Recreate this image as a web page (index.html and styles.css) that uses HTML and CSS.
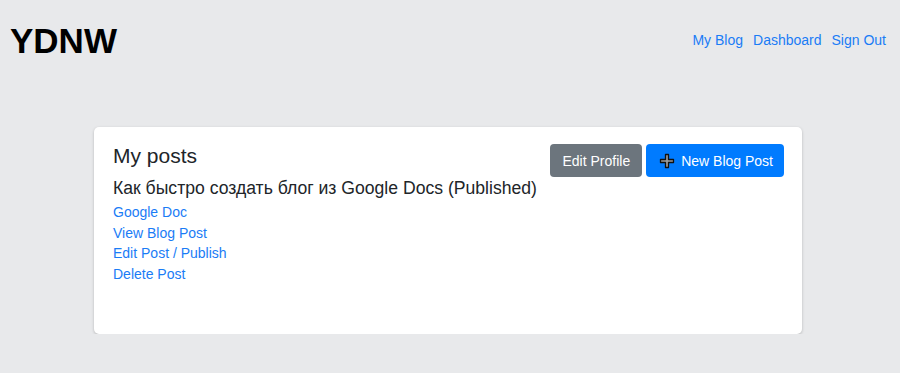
FILE: index.html
```html
<!DOCTYPE html>
<html lang="ru">
<head>
  <meta charset="UTF-8">
  <meta name="viewport" content="width=device-width, initial-scale=1.0">
  <title>YDNW</title>
  <link rel="stylesheet" href="styles.css">
</head>
<body>

  <header class="topbar">
    <span class="logo">YDNW</span>
    <nav class="nav">
      <a href="#">My Blog</a>
      <a href="#">Dashboard</a>
      <a href="#">Sign Out</a>
    </nav>
  </header>

  <div class="card">
    <div class="card-head">
      <h2>My posts</h2>
      <div class="actions">
        <button class="btn btn-gray">Edit Profile</button>
        <button class="btn btn-blue">
          <svg class="plus" width="16" height="16" viewBox="0 0 16 16">
            <path d="M6.5 1.5h3v5h5v3h-5v5h-3v-5h-5v-3h5z" fill="#9a9a9a" stroke="#111" stroke-width="1.3" stroke-linejoin="round"/>
          </svg>
          New Blog Post
        </button>
      </div>
    </div>

    <div class="post">
      <div class="post-title">Как быстро создать блог из Google Docs (Published)</div>
      <a href="#">Google Doc</a>
      <a href="#">View Blog Post</a>
      <a href="#">Edit Post / Publish</a>
      <a href="#">Delete Post</a>
    </div>
  </div>

</body>
</html>
```

FILE: styles.css
```css
body {
  font-family: "Liberation Sans", Arial, sans-serif;
  margin: 0;
  padding: 0;
  background-color: #e8e9eb;
  color: #212529;
}

a {
  color: #1a7cf6;
  text-decoration: none;
}

.topbar {
  display: flex;
  justify-content: space-between;
  align-items: flex-start;
  padding: 20px 14px 0 10px;
  height: 107px;
  box-sizing: border-box;
}

.logo {
  font-size: 35px;
  font-weight: bold;
  color: #000;
  line-height: 42px;
}

.nav {
  display: flex;
  gap: 10px;
  padding-top: 12px;
  font-size: 14px;
}

/* Posts card */
.card {
  width: 708px;
  height: 207px;
  margin: 20px 0 0 94px;
  box-sizing: border-box;
  background: #fff;
  border-radius: 5px;
  box-shadow: 0 1px 3px rgba(0, 0, 0, 0.22);
  padding: 17px 18px 18px 19px;
}

.card-head {
  display: flex;
  justify-content: space-between;
  align-items: flex-start;
}

.card-head h2 {
  margin: 0;
  font-size: 21px;
  font-weight: normal;
  line-height: 24px;
}

.actions {
  display: flex;
  gap: 4px;
}

.btn {
  display: flex;
  align-items: center;
  gap: 6px;
  height: 33px;
  padding: 0 11px;
  border: none;
  border-radius: 4px;
  color: #fff;
  font-family: inherit;
  font-size: 14px;
  cursor: pointer;
}

.btn-gray {
  background-color: #6c757d;
  padding: 0 12px;
}

.btn-blue {
  background-color: #007bff;
  padding-left: 13px;
}

.plus {
  display: block;
}

.post {
  display: flex;
  flex-direction: column;
  align-items: flex-start;
}

.post-title {
  font-size: 17.6px;
  line-height: 22px;
  margin-bottom: 3px;
}

.post a {
  font-size: 14px;
  line-height: 20.5px;
}
```
